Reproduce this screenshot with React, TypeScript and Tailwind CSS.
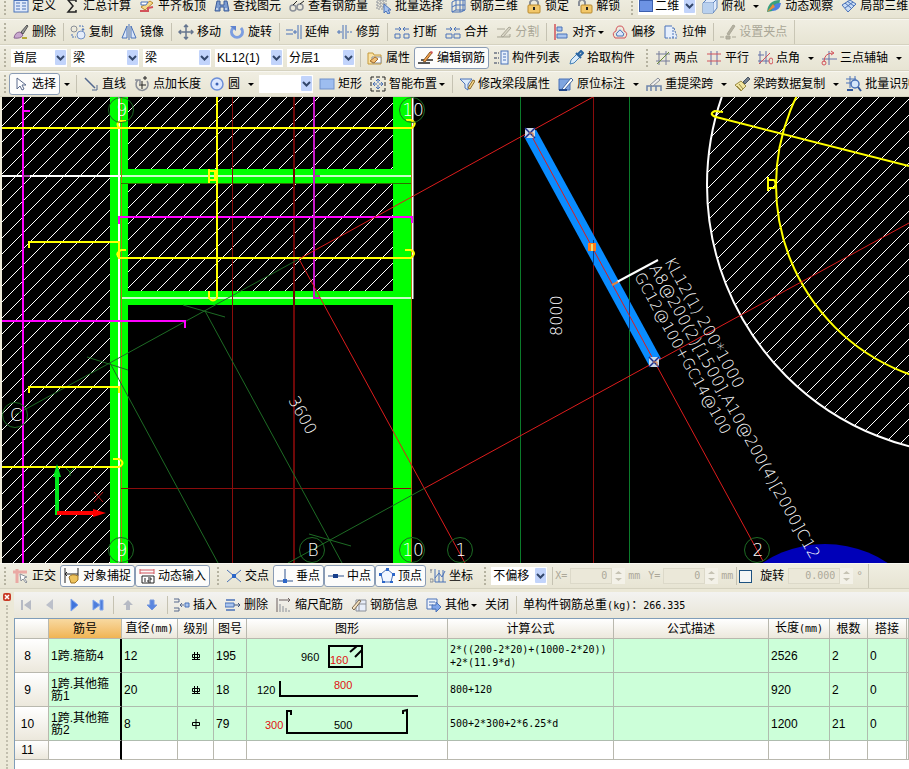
import type { ReactNode } from "react";

const B = "#4a72b8";
const L = "#a9c4ee";
const R = "#d2525a";
const K = "#222222";
const G = "#8a8f98";

// 16x16 toolbar glyphs
const icons: Record<string, ReactNode> = {
  define: (
    <>
      <rect x="1" y="1" width="14" height="13" fill="#dfe9fa" stroke={B} />
      <path d="M3 5h4M3 8h4M3 11h4M9 5h4M9 8h4M9 11h4" stroke={B} />
      <path d="M1 2h14" stroke={B} strokeWidth="2" />
    </>
  ),
  sum: <path d="M12 4V2H4l5 6-5 6h8v-2" stroke={K} strokeWidth="1.5" />,
  slab: (
    <>
      <path d="M2 9l9-6 3 2-8 7z" fill="#f6d98a" stroke="#b98a2e" />
      <path d="M1 13h8v-3l5-1" stroke={R} strokeWidth="2" />
      <path d="M2 4h7l-2 3H2z" fill="#fff" stroke={B} />
    </>
  ),
  find: (
    <>
      <path d="M3 3h3v4h4V3h3l2 10h-5v-4H6v4H1z" fill="#7b9bd0" stroke="#3d5c99" />
      <path d="M3 10v2M12 10v2" stroke="#fff" />
    </>
  ),
  glasses: (
    <>
      <circle cx="4" cy="10" r="3" stroke={G} strokeWidth="1.5" />
      <circle cx="11" cy="9" r="3" stroke={G} strokeWidth="1.5" />
      <path d="M4 7l4-4M11 6l4-3" stroke={K} />
    </>
  ),
  batch: (
    <>
      <path d="M1 2h9v9H1zM4 2v9M7 2v9M1 5h9M1 8h9" stroke={G} strokeDasharray="2 1" />
      <path d="M8 6v9l2-2 2 3 2-1-2-3h3z" fill={L} stroke={B} />
    </>
  ),
  grid3d: (
    <path d="M1 4l4-2v10l-4 2zM5 2h9v10H5M9 2v12M1 9l4-2h9M1 14h9l4-2M12 2v11" stroke={B} />
  ),
  lock: (
    <>
      <path d="M4 8V4q4-5 8 0v4" stroke={G} strokeWidth="2" />
      <rect x="2" y="7" width="12" height="8" rx="1" fill="#f2c76a" stroke="#b98a2e" />
      <path d="M8 9v3" stroke={K} strokeWidth="2" />
    </>
  ),
  unlock: (
    <>
      <path d="M2 8V4q3-5 6 0v3" stroke={G} strokeWidth="2" />
      <rect x="4" y="7" width="11" height="8" rx="1" fill="#f2c76a" stroke="#b98a2e" />
      <path d="M10 9v3" stroke={K} strokeWidth="2" />
    </>
  ),
  cube: (
    <>
      <path d="M1 5l4-4h10v9l-4 5H1z" fill="#dfeafa" stroke="#5a82bd" />
      <path d="M1 5h10v10M11 5l4-4" stroke="#5a82bd" />
      <path d="M1 5h10v10H1z" fill="#b8d0ee" />
    </>
  ),
  orbit: (
    <>
      <path d="M1 14q1-12 13-12-1 11-13 12z" fill="#3aa07e" />
      <path d="M6 13q1-9 9-8-1 8-9 8z" fill="#4e7fe0" />
      <path d="M1 14l6-8 2 3z" fill="#ee8a38" />
    </>
  ),
  part3d: (
    <>
      <path d="M1 7l8-5 6 4-8 8z" fill="#c7dbf5" stroke={B} />
      <path d="M4 5l6 5M6 3l7 5M4 10l8-6" stroke={B} />
    </>
  ),
  brush: (
    <>
      <path d="M8 8l6-7 1 1-5 8z" fill="#999" stroke="#555" />
      <path d="M1 14q1-6 6-6l3 3q-2 4-9 3z" fill="#c9a8cf" stroke="#8a6592" />
      <path d="M9 14h5" stroke="#b7a83a" strokeWidth="2" />
    </>
  ),
  copy: (
    <>
      <circle cx="4" cy="5" r="3" stroke={G} />
      <circle cx="11" cy="11" r="4" stroke="#7593c5" fill="#e5edfa" />
      <path d="M9 2h4v4M12 5l1 2 1-2M2 10v3h4" stroke={B} strokeDasharray="2 1" />
    </>
  ),
  mirror: <path d="M6 2v12H1zM10 2v12h5zM8 0v16" stroke={B} fill="#dbe7fa" />,
  move: (
    <path d="M8 1v14M1 8h14M6 3l2-2 2 2M6 13l2 2 2-2M3 6L1 8l2 2M13 6l2 2-2 2" stroke="#65758f" strokeWidth="1.5" />
  ),
  rotate: (
    <>
      <path d="M4 4a5.500 5.500 0 1 0 8 0" stroke="#7c9ee0" strokeWidth="3" />
      <path d="M1 2h6v5z" fill="#5e83cf" />
    </>
  ),
  extend: <path d="M0 6h7M0 10h7M12 1v14M15 1v14M9 6v4M7 8h4" stroke={B} />,
  trim: <path d="M6 1v14M9 1v14M0 8h5M10 8h2M13 8h2M2 6v4" stroke={B} />,
  break: <path d="M1 10h5v4H1zM10 10h5v4h-5zM1 5h6M5 3l2 2-2 2M15 5H9M11 3L9 5l2 2" stroke={B} />,
  merge: <path d="M1 10h6v4H1zM9 10h6v4H9zM1 5h6M5 3l2 2-2 2M15 5H9M11 3L9 5l2 2" stroke={B} />,
  split: <path d="M1 5h8M1 13h13v-3M5 12l8-9 2 1-8 9z" stroke="#aaa797" fill="#d8d5c5" />,
  align: (
    <>
      <path d="M2 0v16" stroke={R} strokeWidth="1.5" />
      <path d="M4 3h5v4H4zM4 10h10v4H4z" fill={L} stroke={B} />
    </>
  ),
  offset: (
    <>
      <path d="M3 14q-4-5 1-7 0-5 4-5t4 5q5 2 1 7z" stroke={R} />
      <path d="M5 12q-2-3 1-4 2-4 4 0 3 1 1 4z" fill="#dbe7fa" stroke={B} />
    </>
  ),
  stretch: (
    <>
      <path d="M2 2h7l5 12H2z" fill="#e6effc" />
      <path d="M9 2H2v12h3" stroke={B} />
      <path d="M10 3v11M6 14h9M11 4l3 9" stroke={B} strokeDasharray="2 1" />
    </>
  ),
  node: <path d="M0 13h4M12 13h4M6 12h4v3H6zM7 10l6-9 2 1-6 9z" stroke="#aaa797" fill="#b5b2a2" />,
  props: (
    <>
      <path d="M1 3h5l1 2h7v9H1z" fill="#fbe3a4" stroke="#c69a3c" />
      <path d="M5 7h9v6H5z" fill="#fff" stroke={G} />
      <path d="M3 11l5-4 3 2-4 4z" fill="#f2bf77" stroke="#a7702a" />
    </>
  ),
  editbar: (
    <>
      <path d="M0 13h12M3 10h12" stroke={K} strokeWidth="1.5" />
      <path d="M5 11l7-9 2 1-7 9z" fill="#f0a04a" stroke="#8a5b2a" />
      <path d="M12 2l1-1 2 1-1 2z" fill={R} />
    </>
  ),
  list: (
    <>
      <path d="M1 3h3M1 8h3M1 13h3M5 3h1M5 8h1M5 13h1" stroke={G} strokeWidth="2" />
      <rect x="8" y="1" width="7" height="13" fill="#e6effc" stroke={B} />
      <path d="M10 4h3M10 7h3M10 10h3" stroke={B} />
    </>
  ),
  picker: (
    <>
      <path d="M2 14l1-4 6-6 3 3-6 6z" fill="#d9ebfb" stroke="#4480b6" />
      <path d="M8 3l5 5M10 4l3-3 2 2-3 3z" stroke="#2b66a3" strokeWidth="2" />
    </>
  ),
  twopt: (
    <>
      <path d="M4 1v14M11 1v14M1 4h14M1 11h14" stroke="#767c9a" />
      <path d="M2 14L14 2" stroke="#6a8a3c" />
    </>
  ),
  parallel: (
    <>
      <path d="M5 1v14M11 1v14" stroke="#6570a8" />
      <path d="M1 4h14M1 11h14" stroke={R} />
    </>
  ),
  angle: (
    <>
      <path d="M3 1v13M9 1v13M1 11h11M1 5h6" stroke="#6570a8" />
      <path d="M2 14L13 3" stroke={R} />
      <ellipse cx="14" cy="11" rx="2" ry="3" stroke={R} />
    </>
  ),
  axis3: (
    <>
      <path d="M8 1v14M1 9h15" stroke="#6570a8" />
      <path d="M3 12q0-9 9-9M10 1l3 2-3 2" stroke={R} />
      <circle cx="3" cy="13" r="2" stroke={R} />
    </>
  ),
  cursor: <path d="M4 2v11l3-3 2 4 2-1-2-4h4z" fill="#fff" stroke="#5b6b8c" />,
  line: (
    <>
      <path d="M2 2l10 10" stroke="#53688f" strokeWidth="1.500" />
      <path d="M14 9v5H9" stroke="#53688f" />
    </>
  ),
  ptlen: (
    <>
      <path d="M4 4a6 6 0 1 0 9 1M1 4h5v4" stroke={G} strokeWidth="1.500" />
      <path d="M8 5v8M5 9h7M11 0v4M9 2h4" stroke={K} />
    </>
  ),
  circle: (
    <>
      <circle cx="8" cy="8" r="6" fill="#dbe7ff" stroke="#6d8fd8" strokeWidth="1.500" />
      <circle cx="8" cy="8" r="1.500" fill="#3c62b5" />
    </>
  ),
  rect: <rect x="1" y="3" width="14" height="10" fill="#9dbdf0" stroke="#7191cb" />,
  smart: (
    <>
      <path d="M1 1h3M6 1h4M12 1h3v3M15 6v4M15 12v3h-3M10 15H6M4 15H1v-3M1 10V6M1 4V1" stroke={K} />
      <path d="M8 3v4M8 9v4M3 8h4M9 8h4M6 5l2-2 2 2M6 11l2 2 2-2M5 6L3 8l2 2M11 6l2 2-2 2" stroke={B} />
    </>
  ),
  spanprop: (
    <>
      <path d="M1 3h12l-4 5v6l-3-2V8z" fill="#dcebfa" stroke={B} />
      <path d="M9 12l5-8 2 1-5 8z" fill="#f6d78a" stroke="#8a6a2a" />
    </>
  ),
  mark: (
    <>
      <path d="M1 3h11v11H1z" fill="#7fa5df" stroke={B} />
      <path d="M4 13l9-11 2 2-9 10z" fill="#fff" stroke="#44679e" />
      <path d="M1 14h8" stroke="#234a8c" strokeWidth="2" />
    </>
  ),
  respan: (
    <>
      <path d="M1 15v-5h14v5M5 10v5M10 10v5" stroke="#6d84ab" strokeWidth="1.500" />
      <path d="M4 9l8-7 2 2-7 6z" fill="#eee" stroke={G} />
    </>
  ),
  copybrush: (
    <>
      <path d="M9 6l5-5 2 2-5 5z" fill="#74808e" stroke="#4b5562" />
      <path d="M1 9l6-4 5 5-5 5z" fill="#f2e6a0" stroke="#9c8c45" />
      <path d="M3 10l4 4M5 8l4 5" stroke="#9c8c45" />
    </>
  ),
  identify: (
    <>
      <path d="M0 3h10M0 7h5M4 0v12M9 0v4" stroke={B} />
      <circle cx="9" cy="8" r="4" fill="#d4e6fa" stroke={B} strokeWidth="1.500" />
      <path d="M12 11l3 4M1 14h6" stroke="#32589c" strokeWidth="2" />
    </>
  ),
  ortho: (
    <>
      <path d="M0 4h14M4 1v14" stroke="#eaa9a4" strokeWidth="3" />
      <path d="M7 6l7 3-3 1 3 4-1 1-3-4-2 2z" fill="#fff" stroke={G} />
    </>
  ),
  snap: (
    <>
      <path d="M1 0v15M14 0v8M1 6h13M3 4L1 6l2 2" stroke={K} />
      <path d="M5 9q3-4 9-1v4l-3 3H7z" fill="#eec35d" stroke="#9e7527" />
    </>
  ),
  dyn: (
    <>
      <path d="M1 2h14M1 5h14M1 1v5M15 1v5" stroke={R} />
      <path d="M3 8h12v7H3z" fill="#fff" stroke={K} />
      <path d="M6 10v4M9 10h3v2H9v2h3" stroke={K} />
    </>
  ),
  cross: (
    <>
      <path d="M1 2l14 12M15 2L1 14" stroke={B} />
      <path d="M6 6h4v4H6z" fill="#2c66c8" />
    </>
  ),
  perp: (
    <>
      <path d="M8 1v12M0 13h16" stroke="#31558f" />
      <path d="M6 11h4v4H6z" fill="#2c66c8" />
    </>
  ),
  mid: (
    <>
      <path d="M0 8h16" stroke="#31558f" />
      <path d="M5 6h5v4H5z" fill="#173f8c" />
    </>
  ),
  vertex: (
    <>
      <path d="M8 1l6 5-2 8H4L2 6z" fill="#f2f7ff" stroke={B} />
      <path d="M7 0h3v3H7zM0 5h3v3H0zM13 5h3v3h-3zM3 13h3v2H3zM11 13h3v2h-3z" fill="#2c66c8" />
    </>
  ),
  coord: (
    <>
      <path d="M5 1v13h11M5 10l4-5 3 4 3-6M9 2v12M13 2v12" stroke={B} />
      <path d="M0 1l1 2 1-2M1 3v2M0 11h3v3H0z" stroke={G} />
    </>
  ),
  first: <path d="M3 3h2v10H3zM13 3v10L6 8z" fill="#b6bac4" />,
  prev: <path d="M11 2v11L4 8z" fill="#bcc0ca" />,
  next: <path d="M5 2v12l7-6z" fill="#3f74dc" stroke="#7ea4ee" />,
  last: <path d="M3 3v10l7-5zM10 3h3v10h-3z" fill="#4f7edb" stroke="#7ea4ee" />,
  up: <path d="M8 3l5 5h-3v5H6V8H3z" fill="#b6bac4" />,
  down: <path d="M8 13l5-5h-3V3H6v5H3z" fill="#5a86df" stroke="#7597dd" />,
  insert: (
    <>
      <path d="M0 2h5v3H0M0 11h5v3H0M6 8h4M8 6l-2 2 2 2" stroke="#56688c" />
      <path d="M11 6h4v4h-4z" fill={L} stroke={B} />
    </>
  ),
  remove: (
    <>
      <path d="M1 3h9M1 13h9" stroke={B} strokeWidth="1.500" />
      <path d="M0 6h9v4H0z" fill={L} stroke={B} />
      <path d="M9 8h6M13 6l2 2-2 2" stroke="#41557c" />
    </>
  ),
  scale: (
    <>
      <path d="M1 1v14M3 3h11M12 1l2 2-2 2" stroke="#6b5f5f" />
      <path d="M4 7v8M7 9v6M10 11v4M13 13v2" stroke={G} />
    </>
  ),
  info: (
    <>
      <path d="M5 3h10v11H5zM8 3v11M5 7h10" fill="#e8eefa" stroke={G} />
      <path d="M1 11l7-8 2 1-7 9z" fill="#f7e3c1" stroke="#7a6a55" />
    </>
  ),
  other: (
    <>
      <path d="M1 2h10v10H1zM3 5h6M3 8h4" fill="#eef3fc" stroke={B} />
      <path d="M6 8h4V5l5 5-5 5v-3H6z" fill="#7fa5ea" stroke={B} />
    </>
  ),
};

function Icon({ name }: { name: string }) {
  return (
    <svg viewBox="0 0 16 16" className="size-4 shrink-0" fill="none" aria-hidden="true">
      {icons[name]}
    </svg>
  );
}

function Caret() {
  return (
    <svg viewBox="0 0 6 3" className="h-[3px] w-[6px] shrink-0" aria-hidden="true">
      <path d="M0 0h6L3 3z" fill="#000" />
    </svg>
  );
}

type ToolProps = {
  icon?: string;
  label: string;
  pressed?: boolean;
  disabled?: boolean;
  menu?: boolean;
  split?: boolean;
};

function Tool({ icon, label, pressed, disabled, menu, split }: ToolProps) {
  return (
    <>
      <button
        type="button"
        disabled={disabled}
        aria-pressed={pressed}
        className={`flex h-[22px] shrink-0 items-center gap-[3px] rounded-[3px] border px-[3px] ${
          pressed ? "border-[#8a9cb5] bg-[#fcfcfb]" : "border-transparent"
        } ${disabled ? "text-[#aaa797]" : "text-black"}`}
      >
        {icon && <Icon name={icon} />}
        {label}
        {menu && (
          <span className="flex w-[5px] justify-end">
            <Caret />
          </span>
        )}
      </button>
      {split && (
        <button type="button" aria-label={`${label}选项`} className="flex h-[22px] w-[13px] shrink-0 items-center justify-center">
          <Caret />
        </button>
      )}
    </>
  );
}

function Sep() {
  return <span className="mr-[2px] ml-[3px] h-[18px] w-px shrink-0 bg-[#c5c2b2]" />;
}

function Group({ children }: { children: ReactNode }) {
  return (
    <div className="flex h-full shrink-0 items-center pr-[3px]">
      <span className="flex w-[9px] shrink-0 justify-center">
        <span className="h-[18px] border-l-2 border-dotted border-[#b5b2a0]" />
      </span>
      {children}
    </div>
  );
}

function Bar({ children }: { children: ReactNode }) {
  return (
    <div className="flex h-[26px] shrink-0 items-center overflow-hidden border-t border-b border-t-[#f8f7f1] border-b-[#d5d2c0] bg-linear-to-b from-[#f0eee2] to-[#e7e4d3]">
      {children}
    </div>
  );
}

function Combo({ label, value, width, icon }: { label: string; value: string; width: string; icon?: ReactNode }) {
  return (
    <div className={`relative mx-[2px] flex h-[18px] shrink-0 items-center bg-white ${width}`}>
      {icon}
      <select
        aria-label={label}
        defaultValue={value}
        className="h-full w-full appearance-none bg-transparent pr-3 pl-[2px] text-xs leading-[18px] outline-none"
      >
        <option>{value}</option>
      </select>
      <svg viewBox="0 0 11 15" className="pointer-events-none absolute top-px right-px h-[15px] w-[11px]">
        <rect width="11" height="15" rx="1" fill="#c2d4fb" />
        <path d="M2 6l3.500 3.500L9 6" fill="none" stroke="#33476b" strokeWidth="2" />
      </svg>
    </div>
  );
}

function Spin({ label, value, width }: { label: string; value: string; width: string }) {
  return (
    <span className="flex h-4 shrink-0 items-center">
      <input
        aria-label={label}
        defaultValue={value}
        disabled
        className={`h-4 border border-[#dcd9c9] bg-[#ebe8d9] px-1 text-right font-[DejaVu_Sans_Mono,monospace] text-[10px] text-[#aca899] ${width}`}
      />
      <svg viewBox="0 0 13 16" className="h-4 w-[13px]" aria-hidden="true">
        <rect width="13" height="16" fill="#f3f1e8" />
        <path d="M3 6l3.500-3L10 6zM3 10l3.500 3L10 10z" fill="#c6c3b4" />
      </svg>
    </span>
  );
}

function Mono({ children }: { children: ReactNode }) {
  return <span className="font-[DejaVu_Sans_Mono,monospace] text-[10px]">{children}</span>;
}

function AxisBubble({ x, y, text }: { x: number; y: number; text: string }) {
  return (
    <>
      <circle cx={x} cy={y} r="12.500" fill="none" stroke="#1d6b24" />
      <text x={x + 1} y={y + 6} fill="#fff" fontSize="17" textAnchor="middle">
        {text}
      </text>
    </>
  );
}

function Drawing() {
  return (
    <svg
      viewBox="2 97 907 466"
      className="block aspect-[907/466] w-full bg-black font-[DejaVu_Sans,sans-serif] font-extralight"
      fill="none"
      role="img"
      aria-label="梁平面图"
    >
      <defs>
        <pattern id="hatch" width="16" height="16" patternUnits="userSpaceOnUse">
          <path d="M-1 17L17 -1M-1 1L1 -1M15 17L17 15" stroke="#fff" />
        </pattern>
      </defs>

      <path d="M2 97h108v466H2zM128 97h265v72H128zM128 184h265v107H128z" fill="url(#hatch)" />
      <circle cx="977" cy="185" r="270" fill="url(#hatch)" stroke="#fff" strokeWidth="2" />

      {/* beams */}
      <g fill="#00ff00">
        <path d="M110 97h18v466h-18zM393 97h18v466h-18zM128 169h265v14H128zM128 291h265v14H128z" />
      </g>
      <path d="M2 176H121M412.500 97V299" stroke="#fff" strokeWidth="2" />
      <path d="M121 176H411M121 298H412" stroke="#c8ffc8" strokeWidth="2" />
      <path d="M119 97V563" stroke="#fff" strokeWidth="2" />
      <path d="M121.500 97V563M411.500 97V563" stroke="#b07a10" />
      <path d="M121 183.500H411" stroke="#2f6e00" />

      {/* axis grid */}
      <path d="M232.500 97V563M121 488.500H411M593.500 97V563" stroke="#8a0c0c" />
      <path d="M294 97V563" stroke="#6e0808" strokeWidth="2" />
      <path d="M520.500 97V563M629.500 97V563" stroke="#0b7a2a" />
      <g stroke="#1d6b24">
        <path d="M299 259L15 415M183 305l42 12M205 311L342 563M87 357l41 13M110 363L218 563" />
        <path d="M425 488L288 563M309 534l42 12" />
      </g>

      {/* slab bars */}
      <g stroke="#ff00ff" strokeWidth="2">
        <path d="M23 97V563M23 111h7M2 321H185V328M119 224V217H412V223" />
        <path d="M314 97V298h6" stroke="#c818c8" />
        <path d="M23 176h7M314 176h6" stroke="#a050a0" />
      </g>
      <g stroke="#ffff00" strokeWidth="2">
        <path d="M2 128H412q6-5-1-8h-5M126 121h-6q-5 4 0 7" />
        <path d="M217 97V298q-4 5-8 0V291M209 169v14M209 171h6v9h-6" />
        <path d="M29 248V242H119V258H411q6-5 0-8h-6M126 250h-5q-7 4-1 8" />
        <path d="M29 393V387H119V393M2 467H119q7-4 0-8h-6" />
        <circle cx="977" cy="185" r="201" />
        <path d="M909 166L716 117q-8-3-1-6l8 1M768 177v14M768 180h6q3 4 0 8h-6" />
      </g>

      <circle cx="825" cy="657" r="113" fill="#0000b8" />

      {/* selected beam */}
      <path d="M530 133L655 362" stroke="#0a8cff" strokeWidth="14" />
      <path d="M593.500 240v25M629.500 300v30" stroke="#0b3f8a" />
      <path d="M299 259L593 97M299 259L465 563M425 488L909 223M530 133L763 561" stroke="#dd1c1c" />
      <path d="M588 243h8v8h-8z" fill="#ff7a18" />
      <path d="M592 244v7" stroke="#e8e070" strokeWidth="2" />
      <path d="M617 282L658 260" stroke="#fff" strokeWidth="2" />
      <path d="M612 285l6-3" stroke="#e08040" strokeWidth="2" />
      <path d="M525 128h10v10h-10zM649 357h10v10h-10z" fill="#c9d8e8" />
      <path d="M525 128l10 10M535 128l-10 10M649 357l10 10M659 357l-10 10" stroke="#1a2a8a" strokeWidth="1.500" />
      <path d="M529 133h4v4M653 362h4v4" stroke="#e0803a" />

      <AxisBubble x={121} y={110} text="9" />
      <AxisBubble x={412} y={110} text="10" />
      <AxisBubble x={15} y={415} text="C" />
      <AxisBubble x={121} y={550} text="9" />
      <AxisBubble x={312} y={550} text="B" />
      <AxisBubble x={412} y={550} text="10" />
      <AxisBubble x={460} y={550} text="1" />
      <AxisBubble x={757} y={550} text="2" />

      <g fill="#fff" fontSize="16">
        <text transform="translate(288 400) rotate(61)">3600</text>
        <text transform="translate(562 336) rotate(-90)">8000</text>
        <text transform="translate(664 261) rotate(61)">KL12(1) 200*1000</text>
        <text transform="translate(649 268) rotate(61)">A8@200(2)[1500],A10@200(4)[2000]C12</text>
        <text transform="translate(634 276) rotate(61)" fontSize="15">GC12@100+GC14@100</text>
      </g>

      {/* ucs marker */}
      <path d="M57 515V476" stroke="#00e81c" strokeWidth="4" />
      <path d="M57 464l4 13h-8z" fill="#00e81c" />
      <path d="M57 513H95" stroke="#ff0000" strokeWidth="4" />
      <path d="M106 513l-13-4v8z" fill="#ff0000" />
      <path d="M66 468l4 4 4-4M70 472v4" stroke="#1d8a24" />
      <path d="M94 492l9 10M103 492l-9 10" stroke="#c01818" />
    </svg>
  );
}

const shapes: Record<string, ReactNode> = {
  "8": (
    <>
      <path d="M329 646h33v21h-33zM350 652l7-6M355 657l7-7" />
      <text x="301" y="661">960</text>
      <text x="330" y="664" className="fill-[#e01010]">160</text>
    </>
  ),
  "9": (
    <>
      <path d="M280 647v15h138" />
      <text x="257" y="660">120</text>
      <text x="334" y="655" className="fill-[#e01010]">800</text>
    </>
  ),
  "10": (
    <>
      <path d="M291 647v-4h-4v22h120v-23l-4 1v3" />
      <text x="265" y="661" className="fill-[#e01010]">300</text>
      <text x="334" y="661">500</text>
    </>
  ),
};

const rows = [
  { no: "8", name: "1跨.箍筋4", dia: "12", fig: "195", formula: "2*((200-2*20)+(1000-2*20))\n+2*(11.9*d)", len: "2526", count: "2", lap: "0" },
  { no: "9", name: "1跨.其他箍筋1", dia: "20", fig: "18", formula: "800+120", len: "920", count: "2", lap: "0" },
  { no: "10", name: "1跨.其他箍筋2", dia: "8", fig: "79", formula: "500+2*300+2*6.25*d", len: "1200", count: "21", lap: "0" },
];

// steel grade symbol: a circle cut by one or two strokes
function Grade({ double }: { double: boolean }) {
  return (
    <svg viewBox="0 0 10 10" className="mx-auto size-[10px]" fill="none" stroke="#000">
      <path d="M1.500 3.500h7v3h-7z" />
      {double ? <path d="M3.500 1v8M6.500 1v8M1 8.500h8" /> : <path d="M5 0v10" />}
    </svg>
  );
}

const head = "border-r border-b border-[#b9b8ae] bg-linear-to-b from-white to-[#ece8dc] p-0 text-center font-normal";
const cell = "border-r border-b border-[#aebcae] px-[2px] py-0";

function BarTable() {
  return (
    <table className="w-full table-fixed border-separate border-spacing-0 text-left leading-3">
      <colgroup>
        <col className="w-[34px]" />
        <col className="w-[73px]" />
        <col className="w-[56px]" />
        <col className="w-[36px]" />
        <col className="w-[33px]" />
        <col className="w-[201px]" />
        <col className="w-[166px]" />
        <col />
        <col className="w-[61px]" />
        <col className="w-[38px]" />
        <col className="w-[39px]" />
        <col className="w-[2px]" />
      </colgroup>
      <thead>
        <tr className="h-5">
          <th className={head} />
          <th className="border-r border-b border-[#b9b8ae] bg-linear-to-b from-[#f8d9a0] to-[#f0b452] p-0 text-center font-normal">筋号</th>
          <th className={head}>直径<Mono>(mm)</Mono></th>
          <th className={head}>级别</th>
          <th className={head}>图号</th>
          <th className={head}>图形</th>
          <th className={head}>计算公式</th>
          <th className={head}>公式描述</th>
          <th className={head}>长度<Mono>(mm)</Mono></th>
          <th className={head}>根数</th>
          <th className={head}>搭接</th>
          <th className={head} />
        </tr>
      </thead>
      <tbody>
        {rows.map((r) => (
          <tr key={r.no} className="h-[34px] bg-[#ccffd9]">
            <th className={`${head} pr-2`}>{r.no}</th>
            <td className="border-r-2 border-b border-r-black border-b-[#aebcae] px-[2px] py-0 break-all whitespace-normal">{r.name}</td>
            <td className={cell}>{r.dia}</td>
            <td className={cell}>
              <Grade double={r.no !== "10"} />
            </td>
            <td className={cell}>{r.fig}</td>
            <td className="border-r border-b border-[#aebcae] p-0">
              <svg viewBox="247 639 200 33" className="block h-[33px] w-[200px] font-[Liberation_Sans,sans-serif] text-[11px]">
                <g className="fill-none stroke-black [&>text]:stroke-none [&>text:not([class])]:fill-black" strokeWidth="2">
                  {shapes[r.no]}
                </g>
              </svg>
            </td>
            <td className={`${cell} whitespace-pre`}>
              <Mono>{r.formula}</Mono>
            </td>
            <td className={cell} />
            <td className={cell}>{r.len}</td>
            <td className={cell}>{r.count}</td>
            <td className={cell}>{r.lap}</td>
            <td className={cell} />
          </tr>
        ))}
        <tr className="h-[19px]">
          <th className={`${head} pr-2`}>11</th>
          <td className="border-r-2 border-b border-r-black border-b-[#b9b8ae]" />
          {Array.from({ length: 10 }, (_, i) => (
            <td key={i} className="border-r border-b border-[#b9b8ae]" />
          ))}
        </tr>
      </tbody>
    </table>
  );
}

function NavButton({ icon, label }: { icon: string; label: string }) {
  return (
    <button type="button" aria-label={label} className="flex h-[22px] w-6 shrink-0 items-center justify-center">
      <Icon name={icon} />
    </button>
  );
}

export default function App() {
  return (
    <div className="flex min-h-screen flex-col overflow-hidden bg-[#ece9d8] font-[Liberation_Sans,Noto_Sans_CJK_SC,sans-serif] text-xs leading-4 whitespace-nowrap text-black">
      <header className="-mt-[7px]">
        <Bar>
          <Group>
            <Tool icon="define" label="定义" />
            <Tool icon="sum" label="汇总计算" />
            <Tool icon="slab" label="平齐板顶" />
            <Tool icon="find" label="查找图元" />
            <Tool icon="glasses" label="查看钢筋量" />
            <Tool icon="batch" label="批量选择" />
            <Tool icon="grid3d" label="钢筋三维" />
            <Tool icon="lock" label="锁定" />
            <Tool icon="unlock" label="解锁" />
          </Group>
          <Group>
            <Combo
              label="视图"
              value="二维"
              width="w-[58px]"
              icon={<span className="ml-px h-3 w-[14px] shrink-0 border border-[#3c5fae] bg-[#6d93e4]" />}
            />
            <Tool icon="cube" label="俯视" split />
            <Tool icon="orbit" label="动态观察" />
            <Tool icon="part3d" label="局部三维" />
          </Group>
        </Bar>
        <Bar>
          <Group>
            <Tool icon="brush" label="删除" />
            <Sep />
            <Tool icon="copy" label="复制" />
            <Tool icon="mirror" label="镜像" />
            <Sep />
            <Tool icon="move" label="移动" />
            <Tool icon="rotate" label="旋转" />
            <Sep />
            <Tool icon="extend" label="延伸" />
            <Tool icon="trim" label="修剪" />
            <Sep />
            <Tool icon="break" label="打断" />
            <Tool icon="merge" label="合并" />
            <Tool icon="split" label="分割" disabled />
            <Sep />
            <Tool icon="align" label="对齐" menu />
            <Tool icon="offset" label="偏移" />
            <Tool icon="stretch" label="拉伸" />
            <Sep />
            <Tool icon="node" label="设置夹点" disabled />
          </Group>
          <span className="h-full w-px bg-[#c9c6b5]" />
        </Bar>
        <Bar>
          <Group>
            <Combo label="楼层" value="首层" width="w-[56px]" />
            <Combo label="构件类型" value="梁" width="w-[68px]" />
            <Combo label="构件" value="梁" width="w-[68px]" />
            <Combo label="名称" value="KL12(1)" width="w-[68px]" />
            <Combo label="分层" value="分层1" width="w-[68px]" />
            <Sep />
            <Tool icon="props" label="属性" />
            <Tool icon="editbar" label="编辑钢筋" pressed />
            <Tool icon="list" label="构件列表" />
            <Tool icon="picker" label="拾取构件" />
          </Group>
          <Group>
            <Tool icon="twopt" label="两点" />
            <Tool icon="parallel" label="平行" />
            <Tool icon="angle" label="点角" split />
            <Tool icon="axis3" label="三点辅轴" split />
          </Group>
        </Bar>
        <Bar>
          <Group>
            <Tool icon="cursor" label="选择" pressed split />
            <Sep />
            <Tool icon="line" label="直线" />
            <Tool icon="ptlen" label="点加长度" />
            <Tool icon="circle" label="圆" split />
            <Combo label="绘制方式" value="" width="w-[54px]" />
            <Tool icon="rect" label="矩形" />
            <Tool icon="smart" label="智能布置" menu />
            <Sep />
            <Tool icon="spanprop" label="修改梁段属性" />
            <Tool icon="mark" label="原位标注" split />
            <Tool icon="respan" label="重提梁跨" split />
            <Tool icon="copybrush" label="梁跨数据复制" split />
            <Tool icon="identify" label="批量识别" />
          </Group>
        </Bar>
      </header>

      <main className="pl-[2px]">
        <Drawing />
      </main>

      <Bar>
        <Group>
          <Tool icon="ortho" label="正交" />
          <Tool icon="snap" label="对象捕捉" pressed />
          <Tool icon="dyn" label="动态输入" pressed />
        </Group>
        <Group>
          <Tool icon="cross" label="交点" />
          <Tool icon="perp" label="垂点" pressed />
          <Tool icon="mid" label="中点" pressed />
          <Tool icon="vertex" label="顶点" pressed />
          <Tool icon="coord" label="坐标" />
        </Group>
        <Group>
          <Combo label="偏移方式" value="不偏移" width="w-[56px]" />
          <Sep />
          <div className="flex items-center gap-[3px] text-[#aca899]">
            <Mono>X=</Mono>
            <Spin label="X" value="0" width="w-[42px]" />
            <Mono>mm</Mono>
            <span className="w-[2px]" />
            <Mono>Y=</Mono>
            <Spin label="Y" value="0" width="w-[42px]" />
            <Mono>mm</Mono>
          </div>
          <Sep />
          <label className="flex items-center gap-2 pr-1">
            <input type="checkbox" className="size-[13px] appearance-none border border-[#1c5180] bg-[#f4f6f6]" />
            旋转
          </label>
          <Spin label="旋转角度" value="0.000" width="w-[52px]" />
          <span className="ml-1 w-2 text-[#aca899]">°</span>
        </Group>
        <span className="h-full w-px bg-[#c9c6b5]" />
      </Bar>

      <section className="mt-[3px] flex flex-1">
        <div className="flex w-[14px] shrink-0 flex-col items-center gap-1 pt-px">
          <button type="button" aria-label="关闭面板" className="rounded-[2px] bg-[#c93a25]">
            <svg viewBox="0 0 8 8" className="size-2" stroke="#fff" strokeWidth="1.500">
              <path d="M2 2l4 4M6 2L2 6" />
            </svg>
          </button>
          <span className="flex-1 border-l-2 border-dotted border-[#c2bfae]" />
        </div>
        <div className="flex min-w-0 flex-1 flex-col">
          <div className="flex h-[26px] shrink-0 items-center overflow-hidden bg-linear-to-b from-[#f3f3f1] to-[#e9e6d8]">
            <NavButton icon="first" label="第一条" />
            <NavButton icon="prev" label="上一条" />
            <NavButton icon="next" label="下一条" />
            <NavButton icon="last" label="最后一条" />
            <Sep />
            <NavButton icon="up" label="上移" />
            <NavButton icon="down" label="下移" />
            <Sep />
            <Tool icon="insert" label="插入" />
            <Tool icon="remove" label="删除" />
            <Tool icon="scale" label="缩尺配筋" />
            <Tool icon="info" label="钢筋信息" />
            <Tool icon="other" label="其他" menu />
            <Tool label="关闭" />
            <Sep />
            <span className="pl-1">
              单构件钢筋总重<Mono>(kg)</Mono>：<Mono>266.335</Mono>
            </span>
          </div>
          <div className="flex-1 border-t border-l border-[#7f9db9] bg-white">
            <BarTable />
          </div>
        </div>
      </section>
    </div>
  );
}
